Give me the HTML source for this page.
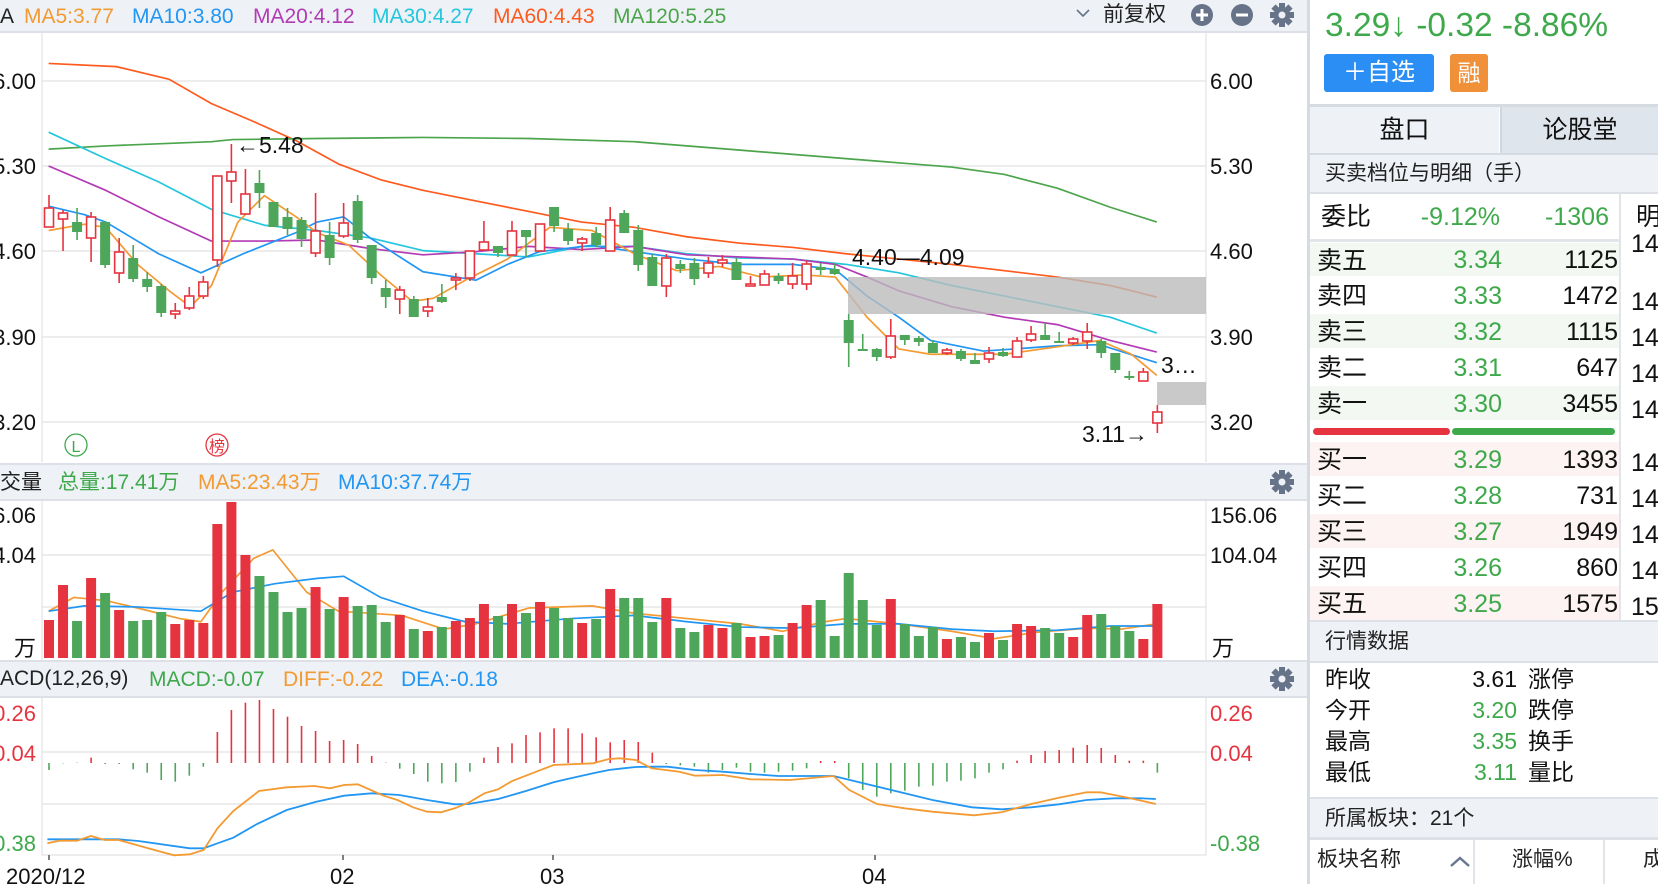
<!DOCTYPE html>
<html><head><meta charset="utf-8">
<style>
*{margin:0;padding:0;box-sizing:border-box}
body{width:1658px;height:884px;overflow:hidden;background:#fff;font-family:"Liberation Sans","Noto Sans CJK SC",sans-serif;position:relative}
.a{position:absolute;white-space:nowrap;line-height:1}
.bar{position:absolute;background:#eef1f6}
.rp{position:absolute;left:1307px;top:0;width:351px;height:884px;background:#fff;border-left:3px solid #d6dbe2}
.g{color:#3ea94b}.r{color:#e5343f}.o{color:#f39a32}.b{color:#2196f3}
</style></head><body>
<div class="bar" style="left:0;top:0;width:1307px;height:33px;border-bottom:2px solid #dde1e7"></div>
<div class="bar" style="left:0;top:463px;width:1307px;height:38px;border-top:2px solid #dde1e7;border-bottom:2px solid #dde1e7"></div>
<div class="bar" style="left:0;top:660px;width:1307px;height:38px;border-top:2px solid #dde1e7;border-bottom:2px solid #dde1e7"></div>

<svg id="c" width="1658" height="884" style="position:absolute;left:0;top:0" font-family="Liberation Sans, Noto Sans CJK SC, sans-serif">
<g stroke="#e2e2e2" stroke-width="1.2">
<line x1="42" y1="81" x2="1206" y2="81"/><line x1="42" y1="166" x2="1206" y2="166"/><line x1="42" y1="251" x2="1206" y2="251"/><line x1="42" y1="337" x2="1206" y2="337"/><line x1="42" y1="422" x2="1206" y2="422"/>
<line x1="42" y1="555" x2="1206" y2="555"/><line x1="42" y1="607" x2="1206" y2="607"/>
<line x1="42" y1="752" x2="1206" y2="752"/><line x1="42" y1="804" x2="1206" y2="804"/><line x1="42" y1="855" x2="1206" y2="855"/>
<line x1="42" y1="33" x2="42" y2="462"/><line x1="42" y1="501" x2="42" y2="660"/><line x1="42" y1="698" x2="42" y2="855"/>
<line x1="1206" y1="33" x2="1206" y2="462"/><line x1="1206" y1="501" x2="1206" y2="660"/><line x1="1206" y1="698" x2="1206" y2="855"/>
</g>
<g stroke="#555" stroke-width="1.5"><line x1="49" y1="855" x2="49" y2="860"/><line x1="343" y1="855" x2="343" y2="860"/><line x1="553" y1="855" x2="553" y2="860"/><line x1="875" y1="855" x2="875" y2="860"/></g>
<g transform="scale(1.0574)" fill="none" stroke-width="1.6" stroke-linejoin="round">
<polyline stroke="#ff5a1e" points="46,60 110,63 160,75 200,98 240,115 280,133 320,155 360,170 400,180 450,190 500,200 550,210 600,215 650,224 700,230 750,234 800,240 850,245 900,250 950,256 1000,262 1050,270 1094,281"/>
<polyline stroke="#4ca54c" points="46,141 100,138 200,134 220,132 300,131 400,130 500,131 600,134 700,142 800,150 900,158 950,165 1000,178 1050,196 1094,210"/>
<polyline stroke="#25c6dd" points="46,125 100,150 150,172 200,198 250,213 300,218 350,225 400,237 450,240 500,243 550,233 600,233 650,240 700,244 750,245 800,250 850,258 900,270 950,280 1000,290 1050,300 1094,315"/>
<polyline stroke="#b23bb5" points="46,157 100,180 150,205 200,228 250,228 300,227 350,235 400,241 450,238 500,233 550,236 600,233 650,241 700,243 750,245 790,250 820,262 850,275 900,290 950,300 1000,307 1050,322 1094,333"/>
<polyline stroke="#2196f3" points="46,195 80,203 100,210 150,240 190,258 230,240 280,220 300,210 325,205 350,225 400,257 450,265 480,250 510,238 560,232 600,238 650,245 700,250 750,250 790,255 820,280 850,300 880,322 930,332 960,330 1000,327 1040,326 1094,343"/>
<polyline stroke="#f39a32" points="46,218 80,212 100,215 130,250 160,275 180,290 200,270 225,210 250,185 280,205 300,220 330,232 360,260 390,285 410,282 440,265 480,245 520,215 560,218 600,240 640,256 680,252 720,262 760,260 790,262 820,300 850,330 880,335 920,335 950,335 1000,328 1040,322 1070,335 1094,355"/>
<polyline stroke="#f39a32" points="46,578 70,565 100,568 130,575 170,585 190,588 210,560 240,528 258,520 290,560 320,578 380,582 420,595 450,590 500,575 560,573 600,580 650,585 700,590 740,597 780,588 800,585 850,590 900,597 940,604 980,598 1030,594 1060,595 1094,590"/>
<polyline stroke="#2196f3" points="46,578 80,573 130,574 190,578 220,560 260,552 300,547 325,545 360,565 400,578 440,588 480,590 540,585 600,582 650,588 700,593 750,594 800,590 850,590 900,595 940,597 1000,596 1050,592 1094,592"/>
</g>
<g id="cd"></g>
<rect x="848" y="277" width="358" height="37" fill="#bcbcbc" opacity="0.8"/>
<rect x="1157" y="382" width="49" height="23" fill="#bcbcbc" opacity="0.8"/>
<g id="vol"></g>
<g id="mh"></g>
<polyline id="dea" fill="none" stroke="#2196f3" stroke-width="1.8"/>
<polyline id="dif" fill="none" stroke="#f39a32" stroke-width="1.8"/>
<g font-size="23" fill="#111">
<text x="236" y="153">←5.48</text>
<text x="852" y="265">4.40—4.09</text>
<text x="1161" y="373">3…</text>
<text x="1082" y="442">3.11→</text>
</g>
<circle cx="76" cy="445" r="11" fill="none" stroke="#3ea94b" stroke-width="1.3"/><text x="76" y="452" font-size="16" fill="#3ea94b" text-anchor="middle">L</text>
<circle cx="217" cy="445" r="11" fill="none" stroke="#e5343f" stroke-width="1.3"/><text x="217" y="452" font-size="16" fill="#e5343f" text-anchor="middle">榜</text>
<g font-size="22" fill="#111">
<text x="36" y="89" text-anchor="end">6.00</text><text x="36" y="174" text-anchor="end">5.30</text><text x="36" y="259" text-anchor="end">4.60</text><text x="36" y="345" text-anchor="end">3.90</text><text x="36" y="430" text-anchor="end">3.20</text>
<text x="36" y="523" text-anchor="end">156.06</text><text x="36" y="563" text-anchor="end">104.04</text><text x="36" y="656" text-anchor="end">万</text>
<text x="36" y="721" text-anchor="end" fill="#e5343f">0.26</text><text x="36" y="761" text-anchor="end" fill="#e5343f">0.04</text><text x="36" y="851" text-anchor="end" fill="#3ea94b">-0.38</text>
<text x="1210" y="89">6.00</text><text x="1210" y="174">5.30</text><text x="1210" y="259">4.60</text><text x="1210" y="345">3.90</text><text x="1210" y="430">3.20</text>
<text x="1210" y="523">156.06</text><text x="1210" y="563">104.04</text><text x="1212" y="656">万</text>
<text x="1210" y="721" fill="#e5343f">0.26</text><text x="1210" y="761" fill="#e5343f">0.04</text><text x="1210" y="851" fill="#3ea94b">-0.38</text>
<text x="6" y="884">2020/12</text><text x="330" y="884">02</text><text x="540" y="884">03</text><text x="862" y="884">04</text>
</g>
<g fill="#667389">
<circle cx="1202" cy="15" r="11"/><circle cx="1242" cy="15" r="11"/>
</g>
<g stroke="#fff" stroke-width="3"><line x1="1196" y1="15" x2="1208" y2="15"/><line x1="1202" y1="9" x2="1202" y2="21"/><line x1="1236" y1="15" x2="1248" y2="15"/></g>
<path d="M1077 10 l6 6 l6 -6" fill="none" stroke="#667389" stroke-width="1.6"/>
<g id="gears"></g>
</svg>

<div class="a" style="left:0;top:6px;font-size:21px;color:#222">A</div>
<div class="a o" style="left:24px;top:6px;font-size:21px">MA5:3.77</div>
<div class="a b" style="left:132px;top:6px;font-size:21px">MA10:3.80</div>
<div class="a" style="left:253px;top:6px;font-size:21px;color:#b23bb5">MA20:4.12</div>
<div class="a" style="left:372px;top:6px;font-size:21px;color:#25c6dd">MA30:4.27</div>
<div class="a" style="left:493px;top:6px;font-size:21px;color:#ff5a1e">MA60:4.43</div>
<div class="a" style="left:613px;top:6px;font-size:21px;color:#4ca54c">MA120:5.25</div>
<div class="a" style="left:1103px;top:4px;font-size:21px;color:#222">前复权</div>

<div class="a" style="left:0;top:472px;font-size:21px;color:#222">交量</div>
<div class="a g" style="left:58px;top:472px;font-size:21px">总量:17.41万</div>
<div class="a o" style="left:198px;top:472px;font-size:21px">MA5:23.43万</div>
<div class="a b" style="left:338px;top:472px;font-size:21px">MA10:37.74万</div>

<div class="a" style="left:0;top:668px;font-size:21px;color:#222">ACD(12,26,9)</div>
<div class="a g" style="left:149px;top:669px;font-size:21px">MACD:-0.07</div>
<div class="a o" style="left:283px;top:669px;font-size:21px">DIFF:-0.22</div>
<div class="a b" style="left:401px;top:669px;font-size:21px">DEA:-0.18</div>

<div class="rp"></div>
<div class="a g" style="left:1325px;top:9px;font-size:33.5px">3.29↓ -0.32 -8.86%</div>
<div class="a" style="left:1324px;top:54px;width:110px;height:38px;background:#2a8ef4;border-radius:3px;color:#fff;font-size:24px;text-align:center;line-height:38px">＋自选</div>
<div class="a" style="left:1450px;top:54px;width:38px;height:38px;background:#f0913a;border-radius:3px;color:#fff;font-size:23px;text-align:center;line-height:38px">融</div>
<div class="a" style="left:1310px;top:104px;width:348px;height:3px;background:#d6dbe2"></div>
<div class="a" style="left:1310px;top:107px;width:189px;height:46px;background:#eef1f6;font-size:25px;color:#111;text-align:center;line-height:46px">盘口</div>
<div class="a" style="left:1500px;top:107px;width:158px;height:46px;background:#dfe5ec;border-left:2px solid #d0d6de;font-size:25px;color:#111;text-align:center;line-height:46px">论股堂</div>
<div class="a" style="left:1310px;top:153px;width:348px;height:41px;background:#eef1f6;border-top:2px solid #d6dbe2;border-bottom:2px solid #dde1e7;font-size:21px;color:#222;line-height:37px;padding-left:15px">买卖档位与明细（手）</div>
<div class="a" style="left:1619px;top:194px;width:2px;height:428px;background:#e1e4e8"></div>
<div class="a" style="left:1310px;top:239px;width:309px;height:3px;background:#e1e4e8"></div>
<div class="a" style="left:1321px;top:196px;font-size:25px;color:#111;line-height:42px">委比</div>
<div class="a g" style="left:1380px;top:196px;width:120px;font-size:25px;line-height:42px;text-align:right">-9.12%</div>
<div class="a g" style="left:1500px;top:196px;width:109px;font-size:25px;line-height:42px;text-align:right">-1306</div>
<div class="a" style="left:1636px;top:196px;font-size:25px;color:#111;line-height:42px">明</div>
<div id="rows"></div>
<div class="a" style="left:1313px;top:428px;width:137px;height:7px;background:#e5343f;border-radius:4px"></div>
<div class="a" style="left:1452px;top:428px;width:163px;height:7px;background:#3ea94b;border-radius:4px"></div>
<div class="a" style="left:1310px;top:620px;width:348px;height:43px;background:#eef1f6;border-top:2px solid #dde1e7;border-bottom:2px solid #dde1e7;font-size:21px;color:#222;line-height:39px;padding-left:15px">行情数据</div>
<div id="qd"></div>
<div class="a" style="left:1310px;top:797px;width:348px;height:43px;background:#eef1f6;border-top:2px solid #dde1e7;border-bottom:3px solid #dde1e7;font-size:21px;color:#222;line-height:39px;padding-left:15px">所属板块：21个</div>
<div class="a" style="left:1317px;top:849px;font-size:21px;color:#222">板块名称</div>
<svg class="a" style="left:1448px;top:855px" width="24" height="14"><path d="M3 11 L12 3 L21 11" fill="none" stroke="#6a7791" stroke-width="2.5"/></svg>
<div class="a" style="left:1473px;top:840px;width:2px;height:44px;background:#e1e4e8"></div>
<div class="a" style="left:1603px;top:840px;width:2px;height:44px;background:#e1e4e8"></div>
<div class="a" style="left:1512px;top:849px;font-size:21px;color:#222">涨幅%</div>
<div class="a" style="left:1643px;top:849px;font-size:21px;color:#222">成</div>

<script>
var NS="http://www.w3.org/2000/svg";
function el(p,t,a){var e=document.createElementNS(NS,t);for(var k in a)e.setAttribute(k,a[k]);p.appendChild(e);return e;}
var R="#e5343f",G="#4ea65a";
var C="R208,227,195,227 R213,219,210,251 G222,232,208,240 R217,238,212,262 G222,265,221,268 R252,273,238,283 G258,279,245,282 G279,287,272,292 G286,313,284,317 R311,314,303,319 R296,308,287,310 R282,296,276,299 R176,260,176,267 R172,181,144,203 R194,214,169,214 G183,193,170,208 G202,227,202,227 G217,229,208,235 G220,239,217,247 R231,253,193,257 G235,258,222,265 R223,236,203,238 G201,240,195,243 G245,278,245,284 G288,297,280,308 R290,299,286,314 G299,317,296,317 R307,311,298,317 G297,302,284,303 R278,280,273,290 R251,278,251,281 R242,250,221,250 G246,253,246,257 R231,255,221,255 G230,237,230,257 R224,251,224,251 G207,226,207,232 G229,241,223,245 R239,243,237,251 G233,245,227,247 R220,251,207,251 G213,233,210,233 G230,265,225,271 G257,286,254,286 R258,286,254,297 G264,269,260,273 G263,279,258,285 R263,273,257,278 R260,263,255,267 G262,280,258,280 R284,286,276,286 R274,285,270,285 G276,281,273,284 R276,284,263,289 R264,284,260,290 G267,270,263,275 G269,274,263,275 G320,343,314,367 G349,351,334,351 G349,357,348,361 R336,357,319,359 G335,340,335,345 G338,342,336,346 G343,353,340,353 R350,353,348,355 G351,359,349,361 G360,364,353,364 R353,359,347,363 G352,356,348,357 R341,357,337,357 R334,340,326,342 G335,340,323,340 G341,343,332,343 R339,343,337,345 R332,341,323,349 G341,353,339,358 G353,370,353,373 G376,378,371,380 R372,381,368,381 R412,423,405,433".split(" ");
var cd=document.getElementById("cd");
var VT=[620,585,621,578,593,610,621,620,612,624,620,623,524,502,555,576,592,612,608,587,609,597,606,605,622,615,629,631,627,621,618,604,616,604,613,602,608,618,623,619,589,598,598,622,598,628,632,625,628,623,637,636,635,623,605,600,636,573,600,625,599,624,636,627,639,637,642,633,640,624,626,628,633,637,615,614,626,631,639,604];
var VC="RRGRGRGGGRRRRRRGGGGRGRGGGRGRGRRRGRGRGGRGRGGGRGGRRGRRGRRGGGGGRGGGRGGRGRRGGRRGGGRR";
var MH=[450,430,428,413,432,432,448,458,480,485,467,440,336,270,248,240,267,290,318,333,363,360,372,408,428,446,462,485,490,486,455,413,381,370,345,337,325,325,340,352,367,360,366,398,432,436,440,458,450,443,455,458,455,452,445,423,423,475,510,530,520,512,500,497,485,482,475,458,448,422,405,393,390,383,375,384,405,422,422,458];
var vol=document.getElementById("vol"),mh=document.getElementById("mh");
for(var i=0;i<80;i++){
 var x=49+i*14.03,s=C[i],t=s[0],v=s.slice(1).split(",").map(Number);
 var col=t=="R"?R:G;
 if(t=="R"){
  if(v[2]<v[0])el(cd,"line",{x1:x,y1:v[2],x2:x,y2:v[0],stroke:col,"stroke-width":1.6});
  if(v[3]>v[1])el(cd,"line",{x1:x,y1:v[1],x2:x,y2:v[3],stroke:col,"stroke-width":1.6});
  el(cd,"rect",{x:x-4.5,y:v[0],width:9,height:Math.max(v[1]-v[0],1.5),fill:"#fff",stroke:col,"stroke-width":1.6});
 }else{
  el(cd,"line",{x1:x,y1:v[2],x2:x,y2:v[3],stroke:col,"stroke-width":1.6});
  el(cd,"rect",{x:x-5,y:v[0],width:10,height:Math.max(v[1]-v[0],2),fill:col});
 }
 var vc=VC[i]=="R"?R:G;
 el(vol,"rect",{x:x-5,y:VT[i],width:10,height:658-VT[i],fill:vc});
 var yy=620+MH[i]/3,base=763;
 el(mh,"line",{x1:x,y1:base,x2:x,y2:yy,stroke:yy<base?R:G,"stroke-width":1.6});
}
function pts(a,ox){var o=[];for(var j=0;j<a.length;j+=2)o.push((ox+a[j]/2.529).toFixed(1)+","+(620+a[j+1]/3).toFixed(1));return o;}
var d7=[120,670,150,662,195,662,230,648,265,660,300,660,370,683,440,706,480,703,515,690,550,625,590,573,655,513,725,502,795,498,835,505,870,495,905,493,970,527,1005,540,1045,562,1080,575,1115,577,1150,565,1185,548,1225,520,1260,508,1295,483,1330,467,1400,435,1500,430,1540,417,1568,415];
var d8=[40,420,80,445,150,455,190,467,260,465,330,478,430,480,540,468,580,510,650,552,720,565,790,575,895,586,965,577,1040,552,1110,533,1145,525,1180,517,1215,517,1285,533,1355,552];
var e7=[120,658,300,658,350,663,480,685,515,685,550,670,590,653,650,612,725,570,800,545,870,527,940,520,1010,525,1080,540,1150,553,1185,552,1260,537,1330,513,1400,487,1435,477,1500,460,1540,450,1568,446];
var e8=[40,441,80,440,120,440,190,450,260,455,330,462,400,468,540,468,610,488,720,520,790,540,890,562,965,568,1040,562,1110,553,1180,540,1250,535,1320,535,1355,537];
document.getElementById("dif").setAttribute("points",pts(d7,0).concat(pts(d8,620)).join(" "));
document.getElementById("dea").setAttribute("points",pts(e7,0).concat(pts(e8,620)).join(" "));
var gs=document.getElementById("gears");
[15,482,679].forEach(function(cy){var cx=1282;
 for(var k=0;k<8;k++){el(gs,"rect",{x:cx-3,y:cy-12,width:6,height:6,fill:"#667389",transform:"rotate("+(k*45)+" "+cx+" "+cy+")"});}
 el(gs,"circle",{cx:cx,cy:cy,r:8,fill:"#667389"});el(gs,"circle",{cx:cx,cy:cy,r:3.5,fill:"#eef1f6"});});
var rows=[["卖五","3.34","1125",243,276,"#f3f8f3","14"],["卖四","3.33","1472",276,314,"#fff","14"],["卖三","3.32","1115",314,348,"#f3f8f3","14"],["卖二","3.31","647",348,386,"#fff","14"],["卖一","3.30","3455",386,420,"#f3f8f3","14"],
["买一","3.29","1393",442,476,"#fdf3f2","14"],["买二","3.28","731",476,514,"#fff","14"],["买三","3.27","1949",514,548,"#fdf3f2","14"],["买四","3.26","860",548,586,"#fff","14"],["买五","3.25","1575",586,620,"#fdf3f2","15"]];
var h="";rows.forEach(function(r,i){var hh=r[4]-r[3];
h+='<div class="a" style="left:1310px;top:'+r[3]+'px;width:309px;height:'+hh+'px;background:'+r[5]+'"></div>';
h+='<div class="a" style="left:1317px;top:'+r[3]+'px;font-size:25px;color:#111;line-height:'+(hh+3)+'px">'+r[0]+'</div>';
h+='<div class="a g" style="left:1400px;width:102px;top:'+r[3]+'px;font-size:25px;text-align:right;line-height:'+(hh+2)+'px">'+r[1]+'</div>';
h+='<div class="a" style="left:1510px;width:108px;top:'+r[3]+'px;font-size:25px;color:#111;text-align:right;line-height:'+(hh+2)+'px">'+r[2]+'</div>';
var ry=i==0?228:r[3]+(i<5?7:4);
h+='<div class="a" style="left:1631px;top:'+ry+'px;font-size:25px;color:#111;line-height:'+hh+'px">'+r[6]+'</div>';});
document.getElementById("rows").innerHTML=h;
var q=[["昨收","3.61","#111","涨停",668],["今开","3.20","#3ea94b","跌停",699],["最高","3.35","#3ea94b","换手",730],["最低","3.11","#3ea94b","量比",761]];
h="";q.forEach(function(r){h+='<div class="a" style="left:1325px;top:'+r[4]+'px;font-size:23px;color:#111">'+r[0]+'</div><div class="a" style="left:1420px;width:97px;text-align:right;top:'+r[4]+'px;font-size:23px;color:'+r[2]+'">'+r[1]+'</div><div class="a" style="left:1528px;top:'+r[4]+'px;font-size:23px;color:#111">'+r[3]+'</div>';});
document.getElementById("qd").innerHTML=h;
</script>
</body></html>
